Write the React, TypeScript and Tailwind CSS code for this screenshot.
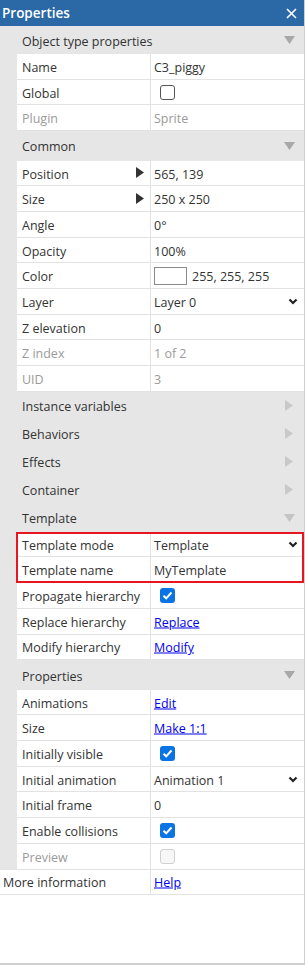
import React from "react";

const font = { fontFamily: '"Open Sans", "Noto Sans", sans-serif' };

function DownTri({ light }: { light?: boolean }) {
  return (
    <svg width="11" height="8" viewBox="0 0 11 8" className="mr-[9px]">
      <polygon points="0,0 11,0 5.5,8" fill={light ? "#c4c4c4" : "#a8a8a8"} />
    </svg>
  );
}

function RightTri() {
  return (
    <svg width="8" height="11" viewBox="0 0 8 11" className="mr-[11px]">
      <polygon points="0,0 8,5.5 0,11" fill="#c8c8c8" />
    </svg>
  );
}

function Chevron() {
  return (
    <svg width="10" height="7" viewBox="0 0 10 7" className="mr-[6px]">
      <polyline points="1.5,1.5 5,5 8.5,1.5" fill="none" stroke="#222" strokeWidth="2.2" />
    </svg>
  );
}

function Check({ on, disabled }: { on?: boolean; disabled?: boolean }) {
  if (on)
    return (
      <span className="ml-[6px] flex h-[15px] w-[15px] items-center justify-center rounded-[3px] bg-[#0b74e5]">
        <svg width="11" height="9" viewBox="0 0 11 9">
          <polyline points="1.5,4.8 4.2,7.3 9.5,1.5" fill="none" stroke="#fff" strokeWidth="2" />
        </svg>
      </span>
    );
  return (
    <span
      className={
        disabled
          ? "ml-[6px] block h-[15px] w-[15px] rounded-[3px] border border-[#d0d0d0] bg-[#f7f7f7]"
          : "ml-[6px] block h-[15px] w-[15px] rounded-[3px] border border-[#555] bg-white"
      }
    />
  );
}

function T({ children }: { children: React.ReactNode }) {
  return <span className="translate-y-[1.5px]">{children}</span>;
}

function Section({
  title,
  open = true,
  light,
  tall,
}: {
  title: string;
  open?: boolean;
  light?: boolean;
  tall?: boolean;
}) {
  return (
    <div
      className={
        (tall ? "h-[29.5px] " : "h-[28px] ") +
        "flex items-center justify-between bg-[#e6e6e6] pl-[22px] text-[#333]"
      }
    >
      <T>{title}</T>
      {open ? <DownTri light={light} /> : <RightTri />}
    </div>
  );
}

function Row({
  label,
  children,
  disabled,
  arrow,
  flush,
}: {
  label: string;
  children?: React.ReactNode;
  disabled?: boolean;
  arrow?: boolean;
  flush?: boolean;
}) {
  return (
    <div className={flush ? "flex h-[25.7px] bg-white" : "ml-[17px] flex h-[25.7px] bg-white"}>
      <div
        className={
          (flush ? "w-[151px] pl-[3px] " : "w-[134px] pl-[5px] ") +
          "flex items-center justify-between border-r border-b border-[#e2e2e2] " +
          (disabled ? "text-[#9a9a9a]" : "text-[#333]")
        }
      >
        <T>{label}</T>
        {arrow && (
          <svg width="8" height="11" viewBox="0 0 8 11" className="mr-[6px]">
            <polygon points="0,0 8,5.5 0,11" fill="#333" />
          </svg>
        )}
      </div>
      <div
        className={
          "flex flex-1 items-center justify-between border-b border-[#e2e2e2] pl-[3px] " +
          (disabled ? "text-[#9a9a9a]" : "text-[#333]")
        }
      >
        {typeof children === "string" ? <T>{children}</T> : children}
      </div>
    </div>
  );
}

function Link({ children }: { children: React.ReactNode }) {
  return <span className="translate-y-[1.5px] text-[#0000ee] underline">{children}</span>;
}

export default function App() {
  return (
    <div className="h-[965px] w-[305px] overflow-hidden bg-white text-[12.5px]" style={font}>
      <div className="flex h-[965px] flex-col border-r border-b-2 border-[#cfcfcf]">
        <div className="flex h-[26px] items-center justify-between bg-[#2a68a6] pl-[2px] pr-[7px] text-white">
          <span className="text-[13.5px] font-semibold">Properties</span>
          <svg width="11" height="11" viewBox="0 0 11 11">
            <path d="M1 1 L10 10 M10 1 L1 10" stroke="#fff" strokeWidth="1.6" />
          </svg>
        </div>

        <div className="bg-[#e6e6e6]">
          <Section title="Object type properties" />
          <Row label="Name">C3_piggy</Row>
          <Row label="Global">
            <Check />
          </Row>
          <Row label="Plugin" disabled>
            Sprite
          </Row>

          <Section title="Common" tall />
          <Row label="Position" arrow>
            565, 139
          </Row>
          <Row label="Size" arrow>
            250 x 250
          </Row>
          <Row label="Angle">0°</Row>
          <Row label="Opacity">100%</Row>
          <Row label="Color">
            <span className="flex items-center gap-[5px]">
              <span className="block h-[18px] w-[33px] border border-[#8a8a8a] bg-white" />
              <T>255, 255, 255</T>
            </span>
          </Row>
          <Row label="Layer">
            <T>Layer 0</T>
            <Chevron />
          </Row>
          <Row label="Z elevation">0</Row>
          <Row label="Z index" disabled>
            1 of 2
          </Row>
          <Row label="UID" disabled>
            3
          </Row>

          <Section title="Instance variables" open={false} />
          <Section title="Behaviors" open={false} />
          <Section title="Effects" open={false} />
          <Section title="Container" open={false} />
          <Section title="Template" light />

          <div className="relative">
            <Row label="Template mode">
              <T>Template</T>
              <Chevron />
            </Row>
            <Row label="Template name">MyTemplate</Row>
            <div className="pointer-events-none absolute inset-y-0 left-[16px] right-0 border-2 border-[#e8141f]" />
          </div>
          <Row label="Propagate hierarchy">
            <Check on />
          </Row>
          <Row label="Replace hierarchy">
            <Link>Replace</Link>
          </Row>
          <Row label="Modify hierarchy">
            <Link>Modify</Link>
          </Row>

          <Section title="Properties" tall />
          <Row label="Animations">
            <Link>Edit</Link>
          </Row>
          <Row label="Size">
            <Link>Make 1:1</Link>
          </Row>
          <Row label="Initially visible">
            <Check on />
          </Row>
          <Row label="Initial animation">
            <T>Animation 1</T>
            <Chevron />
          </Row>
          <Row label="Initial frame">0</Row>
          <Row label="Enable collisions">
            <Check on />
          </Row>
          <Row label="Preview" disabled>
            <Check disabled />
          </Row>
        </div>
        <Row label="More information" flush>
          <Link>Help</Link>
        </Row>
        <div className="flex-1 bg-white" />
      </div>
    </div>
  );
}
